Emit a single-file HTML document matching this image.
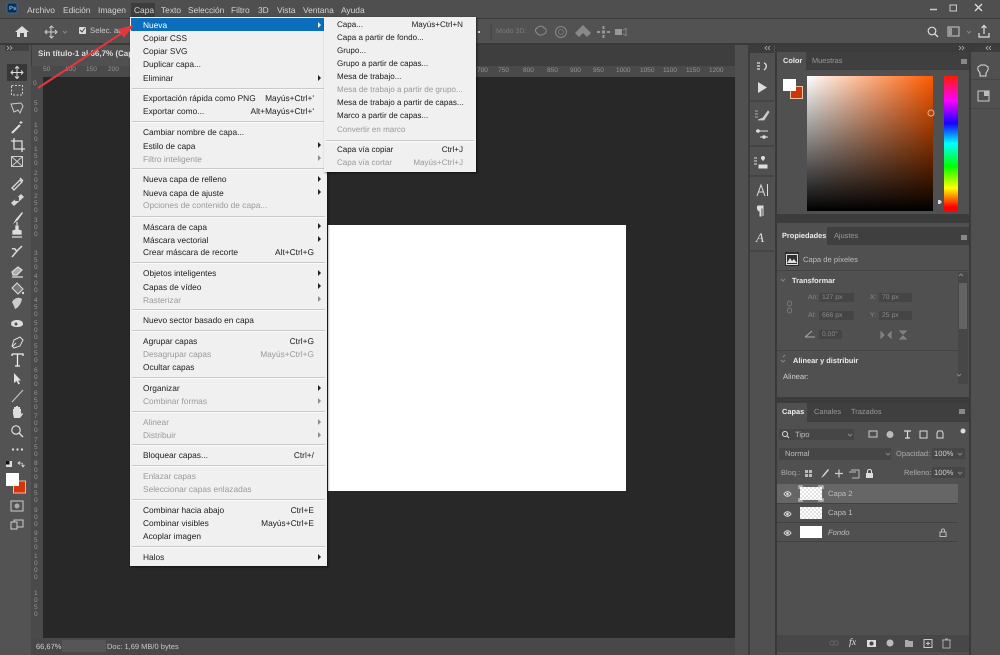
<!DOCTYPE html>
<html lang="es"><head><meta charset="utf-8"><title>Photoshop</title>
<style>
html,body{margin:0;padding:0;width:1000px;height:655px;overflow:hidden;background:#505050}
body{position:relative;font-family:"Liberation Sans",sans-serif;font-size:8.6px;color:#ddd;text-rendering:geometricPrecision;filter:blur(.25px)}
div,span.a{position:absolute}
.t{position:absolute;white-space:nowrap;line-height:12px;height:12px}
.mb{color:#d4d4d4;font-size:8.4px}
.m{color:#1c1c1c;font-size:8.35px}
.sub{font-size:8.05px}
.g{color:#9a9a9a}
.r{text-align:right}
.s{position:absolute;height:1px;background:#c9c9c9;box-shadow:0 1px 0 #fafafa}
.ar{position:absolute;width:0;height:0;border-left:3.5px solid #222;border-top:3px solid transparent;border-bottom:3px solid transparent;left:318px}
.ar.d{border-left-color:#8c8c8c}
.ru{color:#949494;font-size:6.5px}
.p{color:#bdbdbd;font-size:7.6px}
.w{color:#ececec;font-weight:bold;font-size:7.4px}
.f{background:#454545;height:9px}
.d{color:#888;font-size:6.8px}
svg{position:absolute;left:0;top:0}
</style></head><body>

<!-- bars -->
<div style="left:0;top:0;width:1000px;height:18px;background:#4f4f4f"></div>
<div style="left:0;top:18px;width:1000px;height:1px;background:#3a3a3a"></div>
<div style="left:0;top:19px;width:1000px;height:24px;background:#525252"></div>
<div style="left:0;top:43px;width:1000px;height:2px;background:#3a3a3a"></div>
<div style="left:0;top:45px;width:748px;height:21px;background:#3e3e3e"></div>
<div style="left:32px;top:45px;width:100px;height:21px;background:#505050"></div>
<div style="left:0;top:45px;width:31px;height:610px;background:#535353"></div>
<div style="left:5px;top:45px;width:24px;height:6px;background:#424242"></div>
<div style="left:31px;top:66px;width:704px;height:11px;background:#4a4a4a"></div>
<div style="left:31px;top:66px;width:12px;height:574px;background:#4a4a4a"></div>
<div style="left:43px;top:77px;width:692px;height:561px;background:#282828"></div>
<div style="left:735px;top:45px;width:13px;height:610px;background:#505050"></div>
<div style="left:31px;top:638px;width:704px;height:17px;background:#484848"></div>
<div style="left:62px;top:640px;width:44px;height:12px;background:#565656"></div>

<!-- canvas -->
<div style="left:328px;top:225px;width:298px;height:266px;background:#fff"></div>

<!-- right dock -->
<div style="left:748px;top:45px;width:2px;height:610px;background:#3c3c3c"></div>
<div style="left:750px;top:45px;width:24px;height:610px;background:#505050"></div>
<div style="left:775px;top:45px;width:2px;height:610px;background:#3a3a3a"></div>
<div style="left:777px;top:52px;width:192px;height:600px;background:#505050"></div>
<div style="left:969px;top:45px;width:2px;height:610px;background:#3a3a3a"></div>
<div style="left:971px;top:45px;width:29px;height:610px;background:#505050"></div>
<div style="left:777px;top:45px;width:192px;height:7px;background:#3c3c3c"></div>
<div style="left:750px;top:45px;width:24px;height:8px;background:#3c3c3c"></div>
<div style="left:971px;top:45px;width:29px;height:7px;background:#3c3c3c"></div>
<div style="left:750px;top:100px;width:24px;height:2px;background:#454545"></div>
<div style="left:750px;top:145px;width:24px;height:2px;background:#454545"></div>
<div style="left:750px;top:175px;width:24px;height:2px;background:#454545"></div>
<div style="left:750px;top:250px;width:24px;height:2px;background:#454545"></div>
<div style="left:971px;top:79px;width:29px;height:1px;background:#454545"></div>
<div style="left:971px;top:108px;width:29px;height:1px;background:#454545"></div>

<!-- color panel -->
<div style="left:806px;top:52px;width:163px;height:18px;background:#3f3f3f"></div>
<div style="left:777px;top:214px;width:192px;height:9px;background:#3c3c3c"></div>
<div style="left:807px;top:76px;width:126px;height:135px;background:linear-gradient(to bottom,rgba(0,0,0,0),#000),linear-gradient(to right,#fff,#ff5a00)"></div>
<div style="left:944px;top:76px;width:14px;height:135px;background:linear-gradient(to bottom,#ff1a00 0%,#ff00ff 18%,#1800ff 35%,#00ffff 50%,#00ff00 67%,#ffff00 83%,#ff0000 97%);border-radius:1px"></div>
<div style="left:790px;top:86px;width:11px;height:11px;background:#c8380c;border:1px solid #f0c0a8"></div>
<div style="left:783px;top:79px;width:13px;height:12px;background:#fff"></div>

<!-- properties -->
<div style="left:827px;top:227px;width:142px;height:18px;background:#3f3f3f"></div>
<div style="left:777px;top:270px;width:192px;height:1px;background:#444"></div>
<div style="left:777px;top:350px;width:192px;height:1px;background:#444"></div>
<div style="left:777px;top:384px;width:192px;height:19px;background:#505050"></div>
<div style="left:777px;top:397px;width:192px;height:6px;background:#3c3c3c"></div>
<div style="left:958px;top:272px;width:10px;height:112px;background:#474747"></div>
<div style="left:959px;top:283px;width:8px;height:46px;background:#636363"></div>
<div style="left:785px;top:252px;width:14px;height:14px;background:#2f2f2f"></div>
<div class="f" style="left:819px;top:293px;width:35px"></div>
<div class="f" style="left:879px;top:293px;width:33px"></div>
<div class="f" style="left:819px;top:311px;width:35px"></div>
<div class="f" style="left:879px;top:311px;width:33px"></div>
<div class="f" style="left:819px;top:330px;width:23px"></div>

<!-- layers -->
<div style="left:807px;top:403px;width:162px;height:19px;background:#3f3f3f"></div>
<div style="left:779px;top:429px;width:75px;height:11px;background:#464646"></div>
<div style="left:779px;top:448px;width:112px;height:12px;background:#464646"></div>
<div style="left:932px;top:448px;width:33px;height:11px;background:#464646"></div>
<div style="left:932px;top:467px;width:33px;height:11px;background:#464646"></div>
<div style="left:777px;top:484px;width:181px;height:19px;background:#666"></div>
<div style="left:777px;top:503px;width:181px;height:1px;background:#424242"></div>
<div style="left:777px;top:522px;width:181px;height:1px;background:#424242"></div>
<div style="left:777px;top:541px;width:181px;height:1px;background:#424242"></div>
<div style="left:777px;top:635px;width:192px;height:17px;background:#474747"></div>
<div style="left:800px;top:487px;width:22px;height:13px;background:repeating-conic-gradient(#e2e2e2 0 25%,#fff 0 50%) 0 0/4px 4px"></div>
<div style="left:800px;top:507px;width:22px;height:12px;background:repeating-conic-gradient(#e2e2e2 0 25%,#fff 0 50%) 0 0/4px 4px"></div>
<div style="left:800px;top:526px;width:22px;height:12px;background:#fff"></div>

<!-- shapes and icons -->
<svg width="1000" height="655" viewBox="0 0 1000 655" fill="none">
<rect x="7" y="3" width="10" height="10" rx="1.5" fill="#0f2d4a" stroke="#2b6ca3"/>
<path d="M15 32L22 26L29 32H27V37H24V33H20V37H17V32z" fill="#ddd"/>
<path d="M46 32h11M51 26.500v11M47 30l-2 2 2 2M55 30l2 2-2 2M49.500 28l2-2 2 2M49.500 36l2 2 2-2" stroke="#cfcfcf"/>
<path d="M63 31l2 2 2-2" stroke="#888"/>
<rect x="79" y="27" width="7" height="7" rx="1" fill="#ddd"/><path d="M80 30l2 2 3-4" stroke="#444"/>
<path d="M537 28c3-3 6-2 7 0 3 0 3 5 0 6-3 2-6 1-7-1-2-1-2-4 0-5z" stroke="#8a8a8a"/>
<circle cx="561" cy="32" r="5.500" stroke="#8a8a8a"/><circle cx="561" cy="32" r="2.500" stroke="#777"/>
<path d="M584 26l4 4-4 4-4-4zM580 30l4 4-4 4-4-4zM588 30l4 4-4 4-4-4z" fill="#888" transform="translate(-1,-1)"/>
<path d="M597 32h3M607 32h3M603.500 26v3M603.500 35v3" stroke="#999" stroke-width="2"/><rect x="602" y="30.500" width="3" height="3" fill="#999"/>
<rect x="615" y="29" width="7" height="6" fill="#999"/><path d="M623 30l3-1.500v7l-3-1.500" stroke="#888"/>
<line x1="491" y1="23" x2="491" y2="40" stroke="#444"/>
<rect x="478" y="31" width="2" height="2" fill="#ccc"/>
<!-- window controls -->
<path d="M930 9.500h7" stroke="#ccc" stroke-width="1.500"/><rect x="950" y="5" width="6.500" height="6" stroke="#ccc"/><path d="M975 4l7 7M982 4l-7 7" stroke="#ddd" stroke-width="1.300"/>
<circle cx="932" cy="31" r="3.800" stroke="#ddd" stroke-width="1.200"/><path d="M935 34l3 3" stroke="#ddd" stroke-width="1.300"/>
<rect x="948" y="27" width="11" height="9" stroke="#ccc"/><rect x="949" y="28" width="3" height="7" fill="#999"/><path d="M967 31l2 2 2-2" stroke="#888"/>
<path d="M979 33v4h10v-4M984 34v-8M981.500 28l2.500-2.500 2.500 2.500" stroke="#e0e0e0" stroke-width="1.200"/>
<path d="M767 46l-2 2 2 2M770 46l-2 2 2 2M959 46l2 2-2 2M962 46l2 2-2 2M988 46l-2 2 2 2M991 46l-2 2 2 2M7 46l2 2-2 2M10 46l2 2-2 2" stroke="#b5b5b5" stroke-width=".8"/>
<!-- tools -->
<rect x="7" y="64" width="20" height="17" fill="#383838"/>
<path d="M11 72.500h12M17 66.500v12M13 70.500l-2 2 2 2M21 70.500l2 2-2 2M15 68.500l2-2 2 2M15 76.500l2 2 2-2" stroke="#ddd"/>
<rect x="11.500" y="85.500" width="11" height="9.500" stroke="#ccc" stroke-dasharray="2 1.500"/>
<path d="M11 104l10-1 2 3-3 7-2-3-4 2z" stroke="#ccc"/>
<path d="M12 133l8-8" stroke="#e0e0e0" stroke-width="2"/><path d="M21 121v3M19.500 122.500h3" stroke="#ddd"/>
<path d="M14 138v11h11M11 141h11v11" stroke="#e0e0e0" stroke-width="1.300"/>
<rect x="11.500" y="156.500" width="11" height="10" stroke="#ccc"/><path d="M11.500 156.500l11 10M22.500 156.500l-11 10" stroke="#ccc"/>
<path d="M12 188l8-8 2 2-8 8zM20 178l3 3" stroke="#ddd" stroke-width="1.300"/>
<path d="M11 202l10-9 3 3-10 9z" fill="#d8d8d8" transform="translate(0,1)"/><rect x="15" y="197" width="4" height="4" fill="#555"/>
<path d="M13 224l3-5 6-7 1 1-5 7z" fill="#ddd"/>
<path d="M17 227v-3M13 236h8v-3l-3-1v-4h-2v4l-3 1zM12 239h10" stroke="#ddd" stroke-width="1.300" fill="#ddd" transform="translate(0,-2)"/>
<path d="M12 257l5-6 5-5M12 249c2-1 4 0 4 2" stroke="#ddd" stroke-width="1.500"/>
<path d="M12 272l6-5 4 3-5 5h-4zM12 277h11" stroke="#ddd" stroke-width="1.200" fill="#aaa"/>
<path d="M12 288l5-5 6 6-5 5z" stroke="#ddd" fill="#777"/><circle cx="23" cy="293" r="1.200" fill="#ddd"/>
<path d="M12 303c3-5 8-5 10-3-1 5-4 9-7 10l-1-3z" fill="#ccc" transform="translate(0,-1)"/>
<path d="M11 324c0-3 3-4 6-4s6 1 6 4c0 2-3 3-6 3s-6-1-6-3z" fill="#ddd"/><circle cx="16" cy="324" r="1.500" fill="#555"/>
<path d="M12 346l2-6 6-3 3 3-3 6-6 2zM12 347l4-4" stroke="#ddd" fill="#555"/>
<path d="M12 354h11v2M17.500 354v12M15 366h5M12 354v2" stroke="#eee" stroke-width="1.300"/>
<path d="M14 373v10l2.500-2 2 3.500 1.500-1-2-3 3 0z" fill="#e0e0e0"/>
<path d="M12 402l11-12" stroke="#ccc"/>
<path d="M13 414v-5h1v-2h2v-1h2v1h2v2h1v5c1-1 2-1 2 0l-3 4h-6z" fill="#ddd"/>
<circle cx="16" cy="430" r="4.200" stroke="#ddd" stroke-width="1.200"/><path d="M19 433l4 4" stroke="#ddd" stroke-width="1.400"/>
<path d="M12 449.500h2M16.500 449.500h2M21 449.500h2" stroke="#ddd" stroke-width="2"/>
<rect x="6" y="461" width="6" height="6" fill="#ddd"/><rect x="6" y="461" width="3.500" height="3.500" fill="#111"/>
<path d="M18 463h3c1 0 2 1 2 3M20 461.500l-2 1.500 2 1.500M21.500 465l1.500 2 1.500-2" stroke="#ddd" stroke-width=".8"/>
<rect x="13.500" y="481" width="12" height="12" fill="#d6350c" stroke="#f0bca0"/>
<rect x="6" y="473" width="13" height="13" fill="#fff"/>
<rect x="11" y="501" width="12" height="10" stroke="#ccc"/><circle cx="17" cy="506" r="2.500" fill="#aaa"/>
<rect x="14" y="520" width="9" height="7" stroke="#ccc"/><rect x="11" y="522" width="6" height="7" stroke="#ccc" fill="#535353"/>
<!-- dock icons -->
<path d="M757 63h3M757 66h3M757 69h3" stroke="#ccc" stroke-width="1.500"/><path d="M764 63c3 1 3 5 0 7" stroke="#ddd" stroke-width="1.300"/>
<path d="M758 82l9 5.500-9 5.500z" fill="#ddd"/>
<path d="M755 111h3M755 114h3M755 117h3M758 120l5-2 5-7 1 1-5 8z" fill="#ccc" stroke="#ccc" stroke-width=".8"/>
<path d="M756 131h12M760 137h8M756 131h2M766 137h2" stroke="#ddd"/><circle cx="758" cy="131" r="1.800" fill="#ddd"/><circle cx="764" cy="137" r="1.800" fill="#ddd"/>
<path d="M754 158h3M754 161h3M754 164h3M763 158v3M759 165h8v3h-8z" stroke="#ddd" fill="#ddd"/>
<circle cx="763" cy="158" r="2" fill="#ddd"/>
<path d="M978 67l3-2h4l3 2c1 3-1 4-2 6v3h-6v-3c-1-2-3-3-2-6z" stroke="#ddd"/>
<rect x="978" y="91" width="11" height="10" stroke="#ccc"/><rect x="984" y="91" width="5" height="5" fill="#bbb"/>
<path d="M757 196l4-11 4 11M758.500 192h5M767.500 184v12" stroke="#ddd"/>
<path d="M758 206h5v2h-2v8h-1v-5c-3 0-3-5-2-5zM763 206v10" stroke="#ddd" fill="#ddd"/>
<!-- color handles -->
<circle cx="931" cy="113" r="3" stroke="#f0b090"/>
<path d="M938 200h2l2 2-2 2h-2z" fill="#ddd"/>
<rect x="961" y="59" width="6" height="5" fill="#888"/><rect x="961" y="235" width="6" height="5" fill="#888"/><rect x="959" y="409" width="6" height="5" fill="#888"/>
<!-- properties icons -->
<path d="M787 263l3-5 2 3 2-2 3 4z" fill="#ddd"/><rect x="786.500" y="254.500" width="11" height="10" stroke="#ddd"/>
<path d="M781 279l2 2 2-2M781 360l2 2 2-2M783 357l2-2M957 374l2 2 2-2M959 276l2-2 2 2" stroke="#888"/>
<rect x="787.500" y="301" width="4" height="5" rx="2" stroke="#777"/><rect x="787.500" y="308" width="4" height="5" rx="2" stroke="#777"/>
<path d="M805 337l7-6M805 337h10" stroke="#aaa"/>
<path d="M884 335l-3-3v6zM888 335l3-3v6zM906 331h-6l3 3zM906 339h-6l3-3z" stroke="#888" fill="#777"/>
<!-- layers icons -->
<circle cx="785" cy="434" r="2.500" stroke="#ddd"/><path d="M787 436l2 2" stroke="#ddd"/>
<path d="M848 434l2 2 2-2M886 453l2 2 2-2M958 453l2 2 2-2M958 472l2 2 2-2" stroke="#888"/>
<rect x="869" y="431" width="8" height="6" stroke="#ccc"/><circle cx="890" cy="434.500" r="3.500" fill="#bbb"/>
<path d="M904 431h7M907.500 431v7M905 438h5" stroke="#ddd" stroke-width="1.200"/>
<rect x="920" y="431" width="7" height="7" stroke="#ddd"/>
<path d="M938 431h4l1 2v5h-6v-5z" stroke="#ddd"/>
<circle cx="963" cy="431" r="2.500" fill="#ddd"/>
<rect x="805" y="470" width="7" height="7" fill="#bbb"/><path d="M808.500 470v7M805 473.500h7" stroke="#555"/>
<path d="M821 478l2-3 5-6 1 1-5 6z" fill="#ddd"/>
<path d="M835 473.500h8M839 469.500v8" stroke="#ccc" stroke-width="1.200"/>
<path d="M851 470h8v8h-7M849 472h7" stroke="#bbb"/>
<rect x="866" y="473" width="7" height="5" fill="#ddd"/><path d="M867.500 473v-2c0-2 4-2 4 0v2" stroke="#ddd"/>
<path d="M784 494c2-3 5-3 7 0-2 3-5 3-7 0zM784 514c2-3 5-3 7 0-2 3-5 3-7 0zM784 533c2-3 5-3 7 0-2 3-5 3-7 0z" stroke="#ddd" fill="#555"/>
<circle cx="787.500" cy="494" r="1.300" fill="#ddd"/><circle cx="787.500" cy="514" r="1.300" fill="#ddd"/><circle cx="787.500" cy="533" r="1.300" fill="#ddd"/>
<path d="M799 489v-3h4M818 486h5v3M799 498v3h4M818 501h5v-3" stroke="#e0e0e0"/>
<rect x="940" y="532" width="6" height="4.500" stroke="#bbb"/><path d="M941.500 532v-1.500c0-2 3-2 3 0v1.500" stroke="#bbb"/>
<circle cx="832" cy="643" r="2.200" stroke="#666"/><circle cx="836" cy="643" r="2.200" stroke="#666"/>
<rect x="867" y="640" width="9" height="7" fill="#ddd"/><circle cx="871.500" cy="643.500" r="2" fill="#444"/>
<circle cx="890" cy="643" r="3.500" fill="#bbb"/>
<path d="M905 640h3l1 1h4v6h-8z" fill="#aaa"/>
<rect x="924" y="639.500" width="8" height="8" stroke="#ccc"/><path d="M928 641.500v4M926 643.500h4" stroke="#ccc"/>
<path d="M943 640h7v8h-7zM942 640h9M945 639h3" stroke="#aaa"/>
</svg>

<span class="t" style="left:756px;top:232px;font-family:'Liberation Serif',serif;font-style:italic;font-size:13px;color:#ddd">A</span>
<span class="t" style="left:849px;top:637px;font-family:'Liberation Serif',serif;font-style:italic;font-size:10px;color:#ddd">fx</span>

<!-- menubar -->
<span class="t mb" style="left:27px;top:4px">Archivo</span>
<span class="t mb" style="left:63px;top:4px">Edición</span>
<span class="t mb" style="left:98px;top:4px">Imagen</span>
<div style="left:131px;top:3px;width:24px;height:14px;background:#3d3d3d"></div>
<span class="t mb" style="left:134px;top:4px">Capa</span>
<span class="t mb" style="left:161px;top:4px">Texto</span>
<span class="t mb" style="left:188px;top:4px">Selección</span>
<span class="t mb" style="left:231px;top:4px">Filtro</span>
<span class="t mb" style="left:258px;top:4px">3D</span>
<span class="t mb" style="left:277px;top:4px">Vista</span>
<span class="t mb" style="left:303px;top:4px">Ventana</span>
<span class="t mb" style="left:341px;top:4px">Ayuda</span>
<span class="t" style="left:9px;top:3px;font-size:6px;color:#6fb6ef;font-weight:bold">Ps</span>
<span class="t" style="left:90px;top:25px;font-size:7.800px;color:#c8c8c8">Selec. aut</span>
<span class="t" style="left:496px;top:26px;font-size:7px;color:#7a7a7a">Modo 3D:</span>
<span class="t" style="left:38px;top:48px;font-size:8px;color:#dcdcdc;font-weight:bold">Sin título-1 al 66,7% (Cap</span>

<!-- rulers -->
<span class="t ru" style="left:43px;top:64px">50</span><span class="t ru" style="left:65px;top:64px">100</span><span class="t ru" style="left:86px;top:64px">150</span><span class="t ru" style="left:108px;top:64px">200</span>
<span class="t ru" style="left:477px;top:65px">700</span><span class="t ru" style="left:498px;top:65px">750</span><span class="t ru" style="left:523px;top:65px">800</span><span class="t ru" style="left:547px;top:65px">850</span><span class="t ru" style="left:570px;top:65px">900</span><span class="t ru" style="left:593px;top:65px">950</span><span class="t ru" style="left:616px;top:65px">1000</span><span class="t ru" style="left:640px;top:65px">1050</span><span class="t ru" style="left:663px;top:65px">1100</span><span class="t ru" style="left:686px;top:65px">1150</span><span class="t ru" style="left:709px;top:65px">1200</span>
<span class="t ru" style="left:33px;top:80px;width:6px;line-height:8px;height:auto;white-space:normal">0</span>
<span class="t ru" style="left:34px;top:100px;width:5px;line-height:7px;height:auto;white-space:normal">5<br>0</span>
<span class="t ru" style="left:34px;top:122px;width:5px;line-height:7px;height:auto;white-space:normal">1<br>0<br>0</span>
<span class="t ru" style="left:34px;top:146px;width:5px;line-height:7px;height:auto;white-space:normal">1<br>5<br>0</span>
<span class="t ru" style="left:34px;top:170px;width:5px;line-height:7px;height:auto;white-space:normal">2<br>0<br>0</span>
<span class="t ru" style="left:34px;top:193px;width:5px;line-height:7px;height:auto;white-space:normal">2<br>5<br>0</span>
<span class="t ru" style="left:34px;top:217px;width:5px;line-height:7px;height:auto;white-space:normal">3<br>0<br>0</span>
<span class="t ru" style="left:34px;top:250px;width:5px;line-height:7px;height:auto;white-space:normal">3<br>5<br>0</span>
<span class="t ru" style="left:34px;top:273px;width:5px;line-height:7px;height:auto;white-space:normal">4<br>0<br>0</span>
<span class="t ru" style="left:34px;top:297px;width:5px;line-height:7px;height:auto;white-space:normal">4<br>5<br>0</span>
<span class="t ru" style="left:34px;top:320px;width:5px;line-height:7px;height:auto;white-space:normal">5<br>0<br>0</span>
<span class="t ru" style="left:34px;top:343px;width:5px;line-height:7px;height:auto;white-space:normal">5<br>5<br>0</span>
<span class="t ru" style="left:34px;top:367px;width:5px;line-height:7px;height:auto;white-space:normal">6<br>0<br>0</span>
<span class="t ru" style="left:34px;top:390px;width:5px;line-height:7px;height:auto;white-space:normal">6<br>5<br>0</span>
<span class="t ru" style="left:34px;top:413px;width:5px;line-height:7px;height:auto;white-space:normal">7<br>0<br>0</span>
<span class="t ru" style="left:34px;top:437px;width:5px;line-height:7px;height:auto;white-space:normal">7<br>5<br>0</span>
<span class="t ru" style="left:34px;top:460px;width:5px;line-height:7px;height:auto;white-space:normal">8<br>0<br>0</span>
<span class="t ru" style="left:34px;top:483px;width:5px;line-height:7px;height:auto;white-space:normal">8<br>5<br>0</span>
<span class="t ru" style="left:34px;top:507px;width:5px;line-height:7px;height:auto;white-space:normal">9<br>0<br>0</span>
<span class="t ru" style="left:34px;top:530px;width:5px;line-height:7px;height:auto;white-space:normal">9<br>5<br>0</span>
<span class="t ru" style="left:34px;top:553px;width:5px;line-height:7px;height:auto;white-space:normal">1<br>0<br>0<br>0</span>
<span class="t ru" style="left:34px;top:590px;width:5px;line-height:7px;height:auto;white-space:normal">1<br>0<br>5<br>0</span>

<!-- status -->
<span class="t" style="left:36px;top:641px;font-size:7.500px;color:#d0d0d0">66,67%</span>
<span class="t" style="left:107px;top:641px;font-size:7.500px;color:#c8c8c8">Doc: 1,69 MB/0 bytes</span>

<!-- panel text -->
<span class="t w" style="left:783px;top:55px">Color</span>
<span class="t d" style="left:812px;top:55px;font-size:7.400px;color:#999">Muestras</span>
<span class="t w" style="left:782px;top:230px">Propiedades</span>
<span class="t d" style="left:834px;top:230px;font-size:7.400px;color:#999">Ajustes</span>
<span class="t p" style="left:803px;top:254px">Capa de píxeles</span>
<span class="t w" style="left:792px;top:275px">Transformar</span>
<span class="t d" style="left:808px;top:292px">An:</span><span class="t d" style="left:822px;top:292px">127 px</span>
<span class="t d" style="left:870px;top:292px">X:</span><span class="t d" style="left:882px;top:292px">70 px</span>
<span class="t d" style="left:808px;top:310px">Al:</span><span class="t d" style="left:822px;top:310px">666 px</span>
<span class="t d" style="left:870px;top:310px">Y:</span><span class="t d" style="left:882px;top:310px">25 px</span>
<span class="t d" style="left:822px;top:329px">0,00°</span>
<span class="t w" style="left:793px;top:355px">Alinear y distribuir</span>
<span class="t p" style="left:783px;top:371px;color:#d0d0d0">Alinear:</span>
<span class="t w" style="left:782px;top:406px">Capas</span>
<span class="t d" style="left:814px;top:406px;font-size:7.400px;color:#999">Canales</span>
<span class="t d" style="left:851px;top:406px;font-size:7.400px;color:#999">Trazados</span>
<span class="t p" style="left:795px;top:429px">Tipo</span>
<span class="t p" style="left:785px;top:448px">Normal</span>
<span class="t d" style="left:896px;top:448px;font-size:7.500px;color:#aaa">Opacidad:</span>
<span class="t p" style="left:934px;top:448px;color:#d0d0d0">100%</span>
<span class="t d" style="left:781px;top:467px;font-size:7.500px;color:#aaa">Bloq.:</span>
<span class="t d" style="left:904px;top:467px;font-size:7.500px;color:#aaa">Relleno:</span>
<span class="t p" style="left:934px;top:467px;color:#d0d0d0">100%</span>
<span class="t p" style="left:828px;top:488px">Capa 2</span>
<span class="t p" style="left:828px;top:507px">Capa 1</span>
<span class="t p" style="left:828px;top:527px;font-style:italic">Fondo</span>

<!-- main menu -->
<div style="left:130px;top:17px;width:197px;height:549px;background:#f0f0f0;box-shadow:1px 1px 2px rgba(0,0,0,.6)"></div>
<div style="left:131px;top:18px;width:194px;height:13px;background:#0a6ebd"></div>
<div class="s" style="left:132px;top:88px;width:193px"></div>
<div class="s" style="left:132px;top:121px;width:193px"></div>
<div class="s" style="left:132px;top:168px;width:193px"></div>
<div class="s" style="left:132px;top:216px;width:193px"></div>
<div class="s" style="left:132px;top:262px;width:193px"></div>
<div class="s" style="left:132px;top:309px;width:193px"></div>
<div class="s" style="left:132px;top:330px;width:193px"></div>
<div class="s" style="left:132px;top:377px;width:193px"></div>
<div class="s" style="left:132px;top:411px;width:193px"></div>
<div class="s" style="left:132px;top:444px;width:193px"></div>
<div class="s" style="left:132px;top:465px;width:193px"></div>
<div class="s" style="left:132px;top:499px;width:193px"></div>
<div class="s" style="left:132px;top:546px;width:193px"></div>

<span class="t m" style="left:143px;top:19px;color:#fff">Nueva</span>
<span class="t m" style="left:143px;top:32px">Copiar CSS</span>
<span class="t m" style="left:143px;top:45px">Copiar SVG</span>
<span class="t m" style="left:143px;top:58px">Duplicar capa...</span>
<span class="t m" style="left:143px;top:72px">Eliminar</span>
<span class="t m" style="left:143px;top:92px">Exportación rápida como PNG</span>
<span class="t m" style="left:143px;top:105px">Exportar como...</span>
<span class="t m" style="left:143px;top:126px">Cambiar nombre de capa...</span>
<span class="t m" style="left:143px;top:140px">Estilo de capa</span>
<span class="t m g" style="left:143px;top:153px">Filtro inteligente</span>
<span class="t m" style="left:143px;top:173px">Nueva capa de relleno</span>
<span class="t m" style="left:143px;top:187px">Nueva capa de ajuste</span>
<span class="t m g" style="left:143px;top:199px">Opciones de contenido de capa...</span>
<span class="t m" style="left:143px;top:221px">Máscara de capa</span>
<span class="t m" style="left:143px;top:234px">Máscara vectorial</span>
<span class="t m" style="left:143px;top:246px">Crear máscara de recorte</span>
<span class="t m" style="left:143px;top:267px">Objetos inteligentes</span>
<span class="t m" style="left:143px;top:281px">Capas de vídeo</span>
<span class="t m g" style="left:143px;top:294px">Rasterizar</span>
<span class="t m" style="left:143px;top:314px">Nuevo sector basado en capa</span>
<span class="t m" style="left:143px;top:335px">Agrupar capas</span>
<span class="t m g" style="left:143px;top:348px">Desagrupar capas</span>
<span class="t m" style="left:143px;top:361px">Ocultar capas</span>
<span class="t m" style="left:143px;top:382px">Organizar</span>
<span class="t m g" style="left:143px;top:395px">Combinar formas</span>
<span class="t m g" style="left:143px;top:416px">Alinear</span>
<span class="t m g" style="left:143px;top:429px">Distribuir</span>
<span class="t m" style="left:143px;top:449px">Bloquear capas...</span>
<span class="t m g" style="left:143px;top:470px">Enlazar capas</span>
<span class="t m g" style="left:143px;top:483px">Seleccionar capas enlazadas</span>
<span class="t m" style="left:143px;top:504px">Combinar hacia abajo</span>
<span class="t m" style="left:143px;top:517px">Combinar visibles</span>
<span class="t m" style="left:143px;top:530px">Acoplar imagen</span>
<span class="t m" style="left:143px;top:551px">Halos</span>

<span class="t m r" style="right:686px;top:92px">Mayús+Ctrl+'</span>
<span class="t m r" style="right:686px;top:105px">Alt+Mayús+Ctrl+'</span>
<span class="t m r" style="right:686px;top:246px">Alt+Ctrl+G</span>
<span class="t m r" style="right:686px;top:335px">Ctrl+G</span>
<span class="t m r g" style="right:686px;top:348px">Mayús+Ctrl+G</span>
<span class="t m r" style="right:686px;top:449px">Ctrl+/</span>
<span class="t m r" style="right:686px;top:504px">Ctrl+E</span>
<span class="t m r" style="right:686px;top:517px">Mayús+Ctrl+E</span>

<div class="ar" style="top:22px;border-left-color:#fff"></div>
<div class="ar" style="top:75px"></div>
<div class="ar" style="top:142px"></div>
<div class="ar d" style="top:155px"></div>
<div class="ar" style="top:176px"></div>
<div class="ar" style="top:189px"></div>
<div class="ar" style="top:223px"></div>
<div class="ar" style="top:236px"></div>
<div class="ar" style="top:270px"></div>
<div class="ar" style="top:283px"></div>
<div class="ar d" style="top:296px"></div>
<div class="ar" style="top:385px"></div>
<div class="ar d" style="top:398px"></div>
<div class="ar d" style="top:419px"></div>
<div class="ar d" style="top:432px"></div>
<div class="ar" style="top:554px"></div>

<!-- submenu -->
<div style="left:324px;top:17px;width:152px;height:155px;background:#f0f0f0;box-shadow:1px 1px 2px rgba(0,0,0,.6)"></div>
<div class="s" style="left:326px;top:140px;width:148px"></div>
<span class="t m sub" style="left:337px;top:19px">Capa...</span>
<span class="t m sub" style="left:337px;top:32px">Capa a partir de fondo...</span>
<span class="t m sub" style="left:337px;top:45px">Grupo...</span>
<span class="t m sub" style="left:337px;top:58px">Grupo a partir de capas...</span>
<span class="t m sub" style="left:337px;top:71px">Mesa de trabajo...</span>
<span class="t m sub g" style="left:337px;top:84px">Mesa de trabajo a partir de grupo...</span>
<span class="t m sub" style="left:337px;top:97px">Mesa de trabajo a partir de capas...</span>
<span class="t m sub" style="left:337px;top:110px">Marco a partir de capas...</span>
<span class="t m sub g" style="left:337px;top:124px">Convertir en marco</span>
<span class="t m sub" style="left:337px;top:144px">Capa vía copiar</span>
<span class="t m sub g" style="left:337px;top:157px">Capa vía cortar</span>
<span class="t m sub r" style="right:537px;top:19px">Mayús+Ctrl+N</span>
<span class="t m sub r" style="right:537px;top:144px">Ctrl+J</span>
<span class="t m sub r g" style="right:537px;top:157px">Mayús+Ctrl+J</span>

<!-- red arrow -->
<svg width="1000" height="655" viewBox="0 0 1000 655" fill="none">
<path d="M38 88L122 33" stroke="#e0383c" stroke-width="2.200"/>
<path d="M134 25L118 29L124 38z" fill="#e0383c"/>
</svg>
</body></html>
